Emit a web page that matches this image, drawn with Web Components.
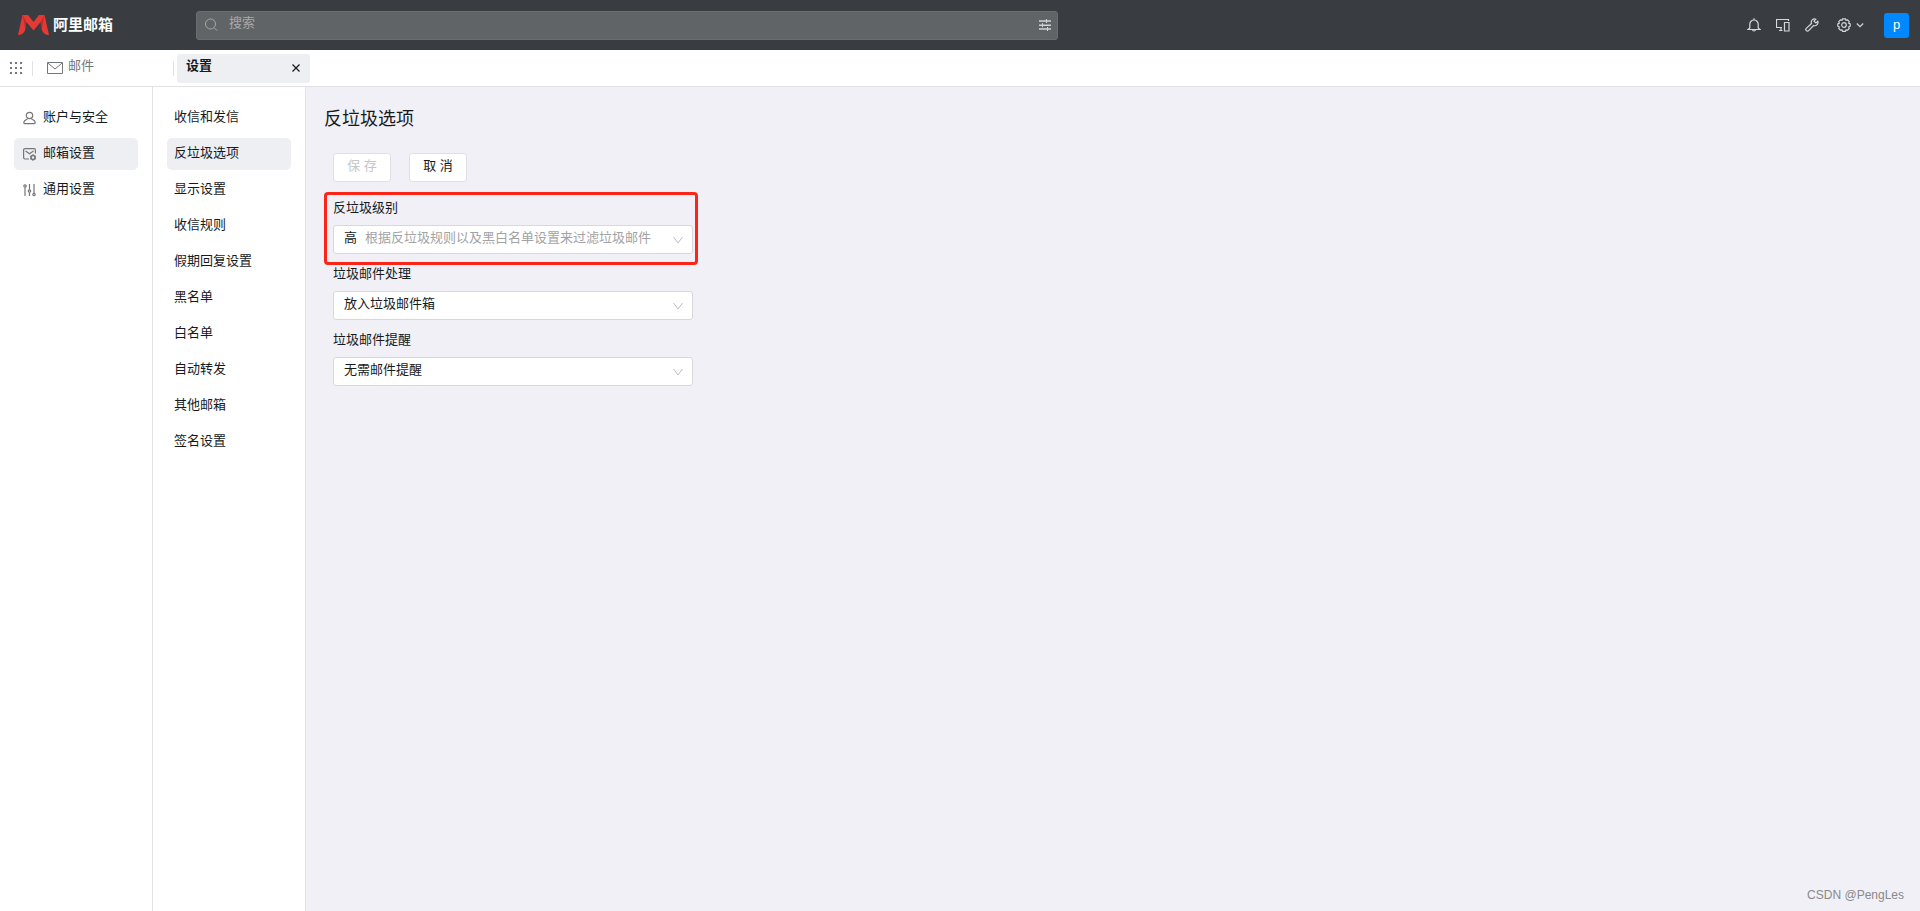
<!DOCTYPE html>
<html lang="zh-CN">
<head>
<meta charset="utf-8">
<title>阿里邮箱 - 设置</title>
<style>
    html, body {
        margin: 0;
        height: 100%;
    }
    body {
        --bar: #393d41;
        --active: #eeeff2;
        --line: #e2e2e5;
        --text: #171a1d;
        --muted: #747677;
        font: 13px/20px "Liberation Sans", "Noto Sans CJK SC", sans-serif;
        color: var(--text);
    }
</style>
</head>
<body>
<mail-app>
    <mail-header slot="header"></mail-header>
    <mail-tabs slot="tabs"></mail-tabs>
    <side-menu slot="menu" label="设置分类">
        <menu-item icon="user">账户与安全</menu-item>
        <menu-item icon="mailset" active>邮箱设置</menu-item>
        <menu-item icon="levels">通用设置</menu-item>
    </side-menu>
    <side-menu slot="menu" label="邮箱设置">
        <menu-item>收信和发信</menu-item>
        <menu-item active>反垃圾选项</menu-item>
        <menu-item>显示设置</menu-item>
        <menu-item>收信规则</menu-item>
        <menu-item>假期回复设置</menu-item>
        <menu-item>黑名单</menu-item>
        <menu-item>白名单</menu-item>
        <menu-item>自动转发</menu-item>
        <menu-item>其他邮箱</menu-item>
        <menu-item>签名设置</menu-item>
    </side-menu>
    <spam-settings>
        <select-field label="反垃圾级别" value="高" hint="根据反垃圾规则以及黑白名单设置来过滤垃圾邮件" marked></select-field>
        <select-field label="垃圾邮件处理" value="放入垃圾邮件箱"></select-field>
        <select-field label="垃圾邮件提醒" value="无需邮件提醒"></select-field>
    </spam-settings>
    <span slot="credit">CSDN @PengLes</span>
</mail-app>

<script>
const icons = {
    logo: `<svg width="31" height="20" viewBox="0 0 31 20">
        <path fill="#e53935" d="M4.500 0H10l5.500 7L21 0h5.500L31 20c-3.500 0-6.500-2-7.200-5.500L22.500 7l-7 8.500-7-8.500-1.300 7.500C6.500 18 3.500 20 0 20z"/>
        <path fill="#b3241f" opacity=".7" d="M4.500 0l4 7-1.300 7.500L6 7zM26.500 0l-4 7 1.300 7.500L25 7z"/></svg>`,
    search: `<svg width="14" height="14" viewBox="0 0 14 14"><circle cx="5.500" cy="6" r="5"/><path d="M9.200 9.700l3 3"/></svg>`,
    filter: `<svg width="12" height="12" viewBox="0 0 12 12" stroke-width="1.500"><path d="M0 2h12M0 6.200h12M0 10h12"/><path stroke-width="1" d="M7.500 0v4M3.500 4.200v4M8.500 8v4"/></svg>`,
    bell: `<svg width="14" height="14" viewBox="0 0 14 14" stroke-width="1.200"><path d="M7 .3v1.500M2.800 10V6.200a4.200 4.200 0 0 1 8.400 0V10l1.800 1.500H1zM5.500 11.500a1.500 1.500 0 0 0 3 0"/></svg>`,
    devices: `<svg width="14" height="14" viewBox="0 0 14 14" stroke-width="1.200"><path d="M12.500 3V1.500h-12v8H6M3 12.500h3.500M5 9.500v3M8.500 4.500h4.500v8.500H8.500z"/></svg>`,
    wrench: `<svg width="14" height="14" viewBox="0 0 14 14" stroke-width="1.200"><path d="M10.800 1.200a3.300 3.300 0 0 0-4.300 4.300L1.300 10.400a1.600 1.600 0 0 0 2.300 2.300l5-5.200a3.300 3.300 0 0 0 4.200-4.300L10.900 5 9 3.200z"/></svg>`,
    gear: `<svg width="14" height="14" viewBox="0 0 14 14" stroke-width="1.200"><path d="M5.600.8h2.800l.6 1.400 1.600-.3 1.600 1.700-.5 1.600 1.500.7v2.300l-1.500.8.5 1.500-1.600 1.700-1.600-.3-.6 1.400H5.600L5 11.900l-1.600.3-1.600-1.700.5-1.500-1.500-.8V5.900l1.500-.7-.5-1.600 1.600-1.700 1.600.3z"/><circle cx="7" cy="7" r="2.300"/></svg>`,
    down: `<svg width="8" height="8" viewBox="0 0 8 8" stroke-width="1.200"><path d="M.8 2.500L4 5.700l3.200-3.200"/></svg>`,
    arrow: `<svg width="10" height="10" viewBox="0 0 10 10"><path d="M.5 2L5 8l4.500-6"/></svg>`,
    apps: `<svg width="12" height="12" viewBox="0 0 12 12" stroke-width="2" stroke-dasharray="2 3"><path d="M0 1h12M0 6h12M0 11h12"/></svg>`,
    mail: `<svg width="16" height="12" viewBox="0 0 16 12"><path d="M.5.5h15v11H.5zM.8 1L8 7l7.200-6"/></svg>`,
    close: `<svg width="8" height="8" viewBox="0 0 8 8" stroke-width="1.200"><path d="M.5.5l7 7M7.500.5l-7 7"/></svg>`,
    user: `<svg width="13" height="14" viewBox="0 0 13 14" stroke-width="1.200"><circle cx="6.500" cy="4.500" r="3.200"/><path d="M4.800 7.500c-.2 1-4 1.400-4 3.900 0 .8.500 1.300 1.300 1.300h8.800c.8 0 1.300-.5 1.300-1.300 0-2.500-3.800-2.900-4-3.900"/></svg>`,
    mailset: `<svg width="13" height="14" viewBox="0 0 13 14" stroke-width="1.200"><path d="M6 12H2A1.400 1.400 0 0 1 .6 10.600V3A1.400 1.400 0 0 1 2 1.600h9A1.400 1.400 0 0 1 12.400 3v3.500M2.500 4l4 2.800 4-2.800"/><circle cx="10" cy="10.500" r="2" stroke-width="1.600"/><path d="M10 7.200v1M10 12.800v1M7.200 9l.9.500M12 11.500l.9.500M7.200 12l.9-.5M12 9.500l.9-.5"/></svg>`,
    levels: `<svg width="13" height="14" viewBox="0 0 13 14" stroke-width="1.200"><circle cx="2" cy="3" r="1.200"/><path d="M2 4.500V13M6.500 1v5.500M6.500 9.500V13M11 1v9"/><circle cx="6.500" cy="8" r="1.200"/><circle cx="11" cy="11.500" r="1.200"/></svg>`
};

const baseStyle = `
    * { box-sizing: border-box; }
    svg { display: block; flex: none; fill: none; stroke: currentColor; }
    button { font: inherit; color: inherit; border: 0; padding: 0; background: none; cursor: pointer; }
    a { color: inherit; text-decoration: none; }
`;

class MailElement extends HTMLElement {

    connectedCallback() {
        this.shadow = this.attachShadow({mode: 'open'});
        this.shadow.innerHTML = `<style>${baseStyle}</style>${this.template()}`;
    }

}

class MailApp extends MailElement {

    template() {
        return `
<style>
    :host {
        display: flex;
        flex-direction: column;
        min-height: 100%;
        position: relative;
    }
    .body {
        display: flex;
        flex: 1;
    }
    main {
        flex: 1;
        min-width: 0;
        background: #f1f0f6;
    }
    .credit {
        position: absolute;
        right: 16px;
        bottom: 6px;
        font-size: 12px;
        color: #88898d;
    }
</style>
<slot name="header"></slot>
<slot name="tabs"></slot>
<div class="body">
    <slot name="menu"></slot>
    <main><slot></slot></main>
</div>
<div class="credit"><slot name="credit"></slot></div>
        `;
    }

}
customElements.define('mail-app', MailApp);

class MailHeader extends MailElement {

    template() {
        return `
<style>
    :host {
        display: block;
        background: var(--bar);
        color: #d5d6d7;
    }
    header {
        display: flex;
        align-items: center;
        height: 50px;
        padding-right: 11px;
    }
    .logo {
        display: flex;
        align-items: center;
        gap: 4px;
        width: 196px;
        flex: none;
        padding-left: 18px;
        font-size: 15px;
        font-weight: 700;
        color: #fff;
    }
    .logo svg {
        stroke: none;
    }
    .search {
        display: flex;
        align-items: center;
        flex: 0 1 862px;
        height: 29px;
        padding: 0 6px 0 8px;
        gap: 10px;
        border: 1px solid #6b6e71;
        border-radius: 3px;
        background: #616467;
        color: #a6a8aa;
    }
    input {
        flex: 1;
        min-width: 0;
        padding: 0 0 4px;
        border: 0;
        outline: 0;
        background: none;
        font: inherit;
        color: #fff;
    }
    input::placeholder {
        color: #a6a8aa;
    }
    .search button {
        color: #d0d1d2;
    }
    .tools {
        display: flex;
        align-items: center;
        gap: 15px;
        margin-left: auto;
    }
    .gear {
        display: flex;
        align-items: center;
        gap: 5px;
        margin: 0 5px 0 3px;
    }
    .avatar {
        width: 25px;
        height: 25px;
        border-radius: 3px;
        background: #08f;
        color: #fff;
    }
</style>
<header>
    <a class="logo" href="#">${icons.logo}<span>阿里邮箱</span></a>
    <div class="search">
        ${icons.search}
        <input type="text" placeholder="搜索" aria-label="搜索">
        <button aria-label="高级搜索">${icons.filter}</button>
    </div>
    <div class="tools">
        <button aria-label="通知">${icons.bell}</button>
        <button aria-label="设备">${icons.devices}</button>
        <button aria-label="工具">${icons.wrench}</button>
        <button class="gear" aria-label="设置">${icons.gear}${icons.down}</button>
        <button class="avatar">p</button>
    </div>
</header>
        `;
    }

}
customElements.define('mail-header', MailHeader);

class MailTabs extends MailElement {

    template() {
        return `
<style>
    :host {
        display: block;
        background: #fff;
        border-bottom: 1px solid var(--line);
    }
    nav {
        display: flex;
        align-items: center;
        height: 36px;
        padding-left: 10px;
        color: var(--muted);
    }
    .split {
        width: 1px;
        height: 15px;
        background: var(--line);
    }
    .apps {
        margin-right: 10px;
    }
    .tab {
        display: flex;
        align-items: center;
        height: 29px;
    }
    .mail {
        gap: 5px;
        width: 140px;
        padding-left: 14px;
    }
    .tab a {
        padding-bottom: 4px;
    }
    .current {
        justify-content: space-between;
        width: 133px;
        margin-left: 3px;
        padding: 0 10px 0 9px;
        border-radius: 3px;
        background: var(--active);
        color: var(--text);
        font-weight: 700;
    }
</style>
<nav>
    <button class="apps" aria-label="应用">${icons.apps}</button>
    <span class="split"></span>
    <div class="tab mail">${icons.mail}<a href="#">邮件</a></div>
    <span class="split"></span>
    <div class="tab current"><a href="#">设置</a><button aria-label="关闭">${icons.close}</button></div>
</nav>
        `;
    }

}
customElements.define('mail-tabs', MailTabs);

class SideMenu extends MailElement {

    template() {
        return `
<style>
    :host {
        display: block;
        flex: none;
        width: 153px;
        padding: 15px 14px;
        box-sizing: border-box;
        border-right: 1px solid var(--line);
        background: #fff;
    }
    nav {
        display: flex;
        flex-direction: column;
        gap: 4px;
    }
</style>
<nav aria-label="${this.getAttribute('label')}"><slot></slot></nav>
        `;
    }

}
customElements.define('side-menu', SideMenu);

class MenuItem extends MailElement {

    template() {
        const icon = this.getAttribute('icon');
        return `
<style>
    :host {
        display: block;
    }
    a {
        display: flex;
        align-items: center;
        gap: 7px;
        height: 32px;
        padding: 0 7px;
        border-radius: 5px;
        white-space: nowrap;
    }
    span {
        padding-bottom: 2px;
    }
    svg {
        margin-left: 2px;
        color: var(--muted);
    }
    :host([active]) a,
    a:hover {
        background: var(--active);
    }
</style>
<a href="#">${icon ? icons[icon] : ''}<span><slot></slot></span></a>
        `;
    }

}
customElements.define('menu-item', MenuItem);

class SpamSettings extends MailElement {

    template() {
        return `
<style>
    :host {
        display: block;
        padding: 20px 18px;
    }
    h1 {
        margin: 0 0 22px;
        font-size: 18px;
        line-height: 24px;
        font-weight: 400;
    }
    .form {
        display: flex;
        flex-direction: column;
        gap: 10px;
        max-width: 369px;
        padding-left: 9px;
    }
    .buttons {
        display: flex;
        gap: 18px;
        margin-bottom: 6px;
    }
    .buttons button {
        width: 58px;
        height: 29px;
        padding-bottom: 4px;
        border: 1px solid #e0e0e4;
        border-radius: 3px;
        background: #fff;
    }
    .buttons button:disabled {
        color: #c6c7c8;
    }
</style>
<h1>反垃圾选项</h1>
<div class="form">
    <div class="buttons">
        <button disabled>保 存</button>
        <button>取 消</button>
    </div>
    <slot></slot>
</div>
        `;
    }

}
customElements.define('spam-settings', SpamSettings);

class SelectField extends MailElement {

    template() {
        const hint = this.getAttribute('hint');
        return `
<style>
    :host {
        display: block;
        position: relative;
    }
    label {
        display: block;
        margin-bottom: 7px;
    }
    .box {
        display: grid;
        align-items: center;
    }
    .box > * {
        grid-area: 1 / 1;
    }
    select {
        appearance: none;
        width: 100%;
        height: 29px;
        padding: 0 24px 3px 10px;
        border: 1px solid #d8d8dc;
        border-radius: 3px;
        background: #fff;
        font: inherit;
        color: inherit;
    }
    .hint {
        padding: 0 24px 3px 32px;
        color: #a2a3a5;
        white-space: nowrap;
        pointer-events: none;
    }
    svg {
        justify-self: end;
        margin-right: 10px;
        color: #bcbdbf;
        pointer-events: none;
    }
    /* frame drawn over the gaps around the field */
    :host([marked])::after {
        content: "";
        position: absolute;
        inset: -6px -5px -11px -9px;
        border: 3px solid #fb2617;
        border-radius: 4px;
        pointer-events: none;
    }
</style>
<label for="field">${this.getAttribute('label')}</label>
<div class="box">
    <select id="field"><option>${this.getAttribute('value')}</option></select>
    ${hint ? `<span class="hint">${hint}</span>` : ''}
    ${icons.arrow}
</div>
        `;
    }

}
customElements.define('select-field', SelectField);
</script>
</body>
</html>
